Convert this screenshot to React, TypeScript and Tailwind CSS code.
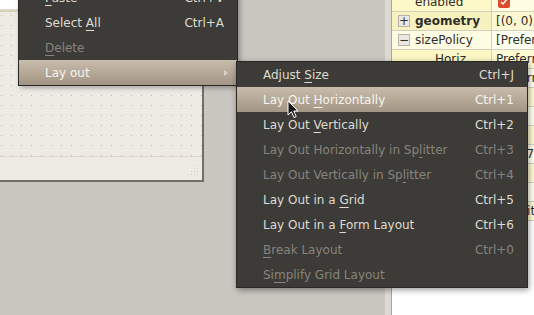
import React from 'react';

type Item = {
  label: React.ReactNode;
  shortcut?: string;
  disabled?: boolean;
  active?: boolean;
  submenu?: boolean;
};

const U = ({ children }: { children: React.ReactNode }) => (
  <span className="underline decoration-1 underline-offset-[3px]">{children}</span>
);

const mainItems: Item[] = [
  { label: <><U>P</U>aste</>, shortcut: 'Ctrl+V' },
  { label: <>Select <U>A</U>ll</>, shortcut: 'Ctrl+A' },
  { label: <><U>D</U>elete</>, disabled: true },
  { label: 'Lay out', active: true, submenu: true },
];

const layoutItems: Item[] = [
  { label: <>Adjust <U>S</U>ize</>, shortcut: 'Ctrl+J' },
  { label: <>Lay Out <U>H</U>orizontally</>, shortcut: 'Ctrl+1', active: true },
  { label: <>Lay Out <U>V</U>ertically</>, shortcut: 'Ctrl+2' },
  { label: <>Lay Out Horizontally in Sp<U>l</U>itter</>, shortcut: 'Ctrl+3', disabled: true },
  { label: <>Lay Out Vertically in Sp<U>l</U>itter</>, shortcut: 'Ctrl+4', disabled: true },
  { label: <>Lay Out in a <U>G</U>rid</>, shortcut: 'Ctrl+5' },
  { label: <>Lay Out in a <U>F</U>orm Layout</>, shortcut: 'Ctrl+6' },
  { label: <><U>B</U>reak Layout</>, shortcut: 'Ctrl+0', disabled: true },
  { label: <>Si<U>m</U>plify Grid Layout</>, disabled: true },
];

const MenuRow = ({ item }: { item: Item }) => (
  <div
    className={`h-[25px] flex items-center justify-between pl-[26px] pr-[13px] ${
      item.active
        ? 'bg-[linear-gradient(to_bottom,#c8bcac,#a39583)] text-[#f6f4f0]'
        : item.disabled
        ? 'text-[#87847d]'
        : 'text-[#dfdbd2]'
    }`}
  >
    <span>{item.label}</span>
    {item.submenu ? (
      <span className="w-0 h-0 border-y-[3px] border-y-transparent border-l-[4px] border-l-[#d8d2c8] mr-[-4px]" />
    ) : (
      <span>{item.shortcut}</span>
    )}
  </div>
);

type Prop = { name: string; value?: string; bold?: boolean; exp?: '+' | '-'; indent?: boolean; check?: boolean; nameBg: string; valBg: string };

const props: Prop[] = [
  { name: 'enabled', check: true, nameBg: 'bg-[#fcf8c8]', valBg: 'bg-[#fffde2]' },
  { name: 'geometry', value: '[(0, 0), 400 x 300]', bold: true, exp: '+', nameBg: 'bg-[#f7f1c0]', valBg: 'bg-[#fcf9d2]' },
  { name: 'sizePolicy', value: '[Preferred, Preferred, 0, 0]', exp: '-', nameBg: 'bg-[#fefde3]', valBg: 'bg-[#fffff0]' },
  { name: 'Horizontal Policy', value: 'Preferred', indent: true, nameBg: 'bg-[#fbf6c4]', valBg: 'bg-[#fdfad3]' },
  { name: 'Vertical Policy', value: 'Preferred', indent: true, nameBg: 'bg-[#fefde3]', valBg: 'bg-[#fffff0]' },
  { name: 'Horizontal Stretch', value: '0', indent: true, nameBg: 'bg-[#fbf6c4]', valBg: 'bg-[#fdfad3]' },
  { name: 'Vertical Stretch', value: '0', indent: true, nameBg: 'bg-[#fefde3]', valBg: 'bg-[#fffff0]' },
  { name: 'minimumSize', value: '0 x 0', exp: '+', nameBg: 'bg-[#fbf6c4]', valBg: 'bg-[#fdfad3]' },
  { name: 'maximumSize', value: '16777215 x 16777215', exp: '+', nameBg: 'bg-[#fefde3]', valBg: 'bg-[#fffff0]' },
  { name: 'sizeIncrement', value: '0 x 0', exp: '+', nameBg: 'bg-[#fbf6c4]', valBg: 'bg-[#fdfad3]' },
  { name: 'baseSize', value: '0 x 0', exp: '+', nameBg: 'bg-[#fefde3]', valBg: 'bg-[#fffff0]' },
  { name: 'palette', value: 'Inherited', nameBg: 'bg-[#fbf6c4]', valBg: 'bg-[#fdfad3]' },
];

export default function App() {
  return (
    <div className="relative w-[534px] h-[315px] overflow-hidden bg-[#c9c5bf] flex font-['DejaVu_Sans',sans-serif] text-[12px]">
      {/* designer canvas */}
      <div className="w-[385px] shrink-0">
        <div className="w-[204px] h-[182px] border-r-2 border-b-2 border-[#716e69] bg-[#eeebe5] flex flex-col">
          <div className="h-[9px] bg-white" />
          <div className="h-[3px] bg-[linear-gradient(to_bottom,#e2dccf,#d5ccba)]" />
          <svg className="h-[144px] w-full block" aria-hidden>
            <defs>
              <pattern id="dots" width="10" height="10" patternUnits="userSpaceOnUse">
                <rect x="1" y="3" width="1" height="1" fill="#bdb8ae" />
              </pattern>
            </defs>
            <rect width="100%" height="100%" fill="url(#dots)" />
          </svg>
          <div className="h-px bg-[#dcd7c9]" />
          <div className="flex-1 flex justify-end items-end pr-[3px] pb-[3px]">
            <svg width="12" height="12" aria-hidden>
              {[[10, 0], [10, 3], [7, 3], [10, 6], [7, 6], [4, 6], [10, 9], [7, 9], [4, 9], [1, 9]].map(([x, y], i) => (
                <rect key={i} x={x} y={y} width="1" height="1" fill="#d3cec2" />
              ))}
            </svg>
          </div>
        </div>
      </div>

      {/* property editor dock */}
      <div className="flex-1 flex">
        <div className="w-[6px] bg-[#dedad3]" />
        <div className="w-px bg-[#aaa69f]" />
        <div className="flex-1 bg-white overflow-hidden text-[#2e2d2a]">
          <div className="mt-[-7px]">
            {props.map((p) => (
              <div key={p.name} className="h-[19px] flex border-b border-[#d3cfbf]">
                <div className={`w-[100px] shrink-0 flex items-center overflow-hidden border-r border-[#d3cfbf] ${p.nameBg} ${p.indent ? 'pl-[43px]' : 'pl-[6px]'}`}>
                  {!p.indent && (
                    <span className="w-[12px] h-[12px] mr-[5px] shrink-0 flex items-center justify-center">
                      {p.exp && (
                        <span className="w-[12px] h-[12px] bg-[#ebe8e2] border border-[#b7b3ab] flex items-center justify-center text-[12px] leading-none text-[#333]">
                          {p.exp === '+' ? '+' : '−'}
                        </span>
                      )}
                    </span>
                  )}
                  <span className={`whitespace-nowrap ${p.indent ? 'max-w-[50px] truncate' : ''} ${p.bold ? 'font-bold' : ''}`}>{p.name}</span>
                </div>
                <div className={`flex-1 min-w-0 flex items-center overflow-hidden pl-[4px] whitespace-nowrap ${p.valBg}`}>
                  {p.check ? (
                    <span className="ml-[2px] w-[12px] h-[12px] rounded-[2px] bg-[#df4a2b] flex items-center justify-center">
                      <svg width="8" height="8" viewBox="0 0 8 8"><path d="M1 4l2 2 4-5" stroke="#fff" strokeWidth="1.5" fill="none" /></svg>
                    </span>
                  ) : (
                    p.value
                  )}
                </div>
              </div>
            ))}
          </div>
        </div>
      </div>

      {/* context menu */}
      <div className="absolute left-[18px] top-[-16px] w-[220px] bg-[#3c3b37] border border-[#2a2926] shadow-[2px_2px_5px_rgba(0,0,0,0.3)]">
        {mainItems.map((it, i) => (
          <MenuRow key={i} item={it} />
        ))}
      </div>

      {/* layout submenu */}
      <div className="absolute left-[236px] top-[61px] w-[292px] bg-[#3c3b37] border border-[#2a2926] shadow-[1px_2px_6px_rgba(0,0,0,0.4)]">
        {layoutItems.map((it, i) => (
          <MenuRow key={i} item={it} />
        ))}
      </div>

      {/* mouse pointer */}
      <svg className="absolute left-[287px] top-[100px]" width="13" height="20" viewBox="0 0 13 20" aria-hidden>
        <path d="M1 1 L1 15 L4.5 11.8 L7 17.5 L9.2 16.6 L6.8 11 L11 11 Z" fill="#1a1a1a" stroke="#ffffff" strokeWidth="1" strokeLinejoin="round" />
      </svg>
    </div>
  );
}
